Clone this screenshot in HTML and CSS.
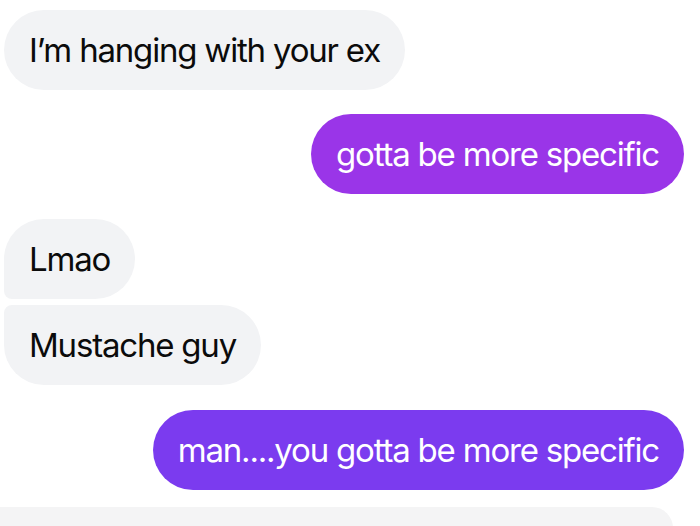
FILE: index.html
```html
<!DOCTYPE html>
<html lang="en">
<head>
  <meta charset="UTF-8">
  <meta name="viewport" content="width=device-width, initial-scale=1">
  <title>Chat</title>
  <link rel="stylesheet" href="styles.css">
</head>
<body>
  <div class="thread">
    <!-- Messages reçus / envoyés -->
    <div class="msg in">I’m hanging with your ex</div>
    <div class="msg out out-1">gotta be more specific</div>
    <div class="group">
      <div class="msg in first">Lmao</div>
      <div class="msg in last">Mustache guy</div>
    </div>
    <div class="msg out out-2">man....you gotta be more specific</div>
  </div>
  <!-- Zone de saisie en bas -->
  <div class="composer"></div>
</body>
</html>
```

FILE: styles.css
```css
/* Base */
body {
  margin: 0;
  background: #fff;
  font-family: Inter, "Noto Sans", sans-serif;
  width: 700px;
  height: 526px;
  overflow: hidden;
}
.thread {
  display: flex;
  flex-direction: column;
  padding: 10px 16px 0 4px;
}
/* Bulle de message */
.msg {
  height: 80px;
  line-height: 80px;
  padding: 0 25px;
  border-radius: 40px;
  font-size: 33px;
  letter-spacing: -1.2px;
  white-space: nowrap;
}
.in {
  align-self: flex-start;
  background: #f2f3f5;
  color: #0b0b0b;
}
.out {
  align-self: flex-end;
  color: #fff;
}
.out-1 {
  margin-top: 24px;
  background: #9a35e8;
}
.out-2 {
  margin-top: 25px;
  background: #7b3bef;
}
/* Messages groupés */
.group {
  display: flex;
  flex-direction: column;
  align-items: flex-start;
  gap: 6px;
  margin-top: 25px;
}
.in.first { border-bottom-left-radius: 8px; }
.in.last { border-top-left-radius: 8px; }
/* Barre du bas */
.composer {
  margin-top: 17px;
  width: 673px;
  height: 21px;
  background: #f4f4f5;
  border-top-right-radius: 40px;
}
```
